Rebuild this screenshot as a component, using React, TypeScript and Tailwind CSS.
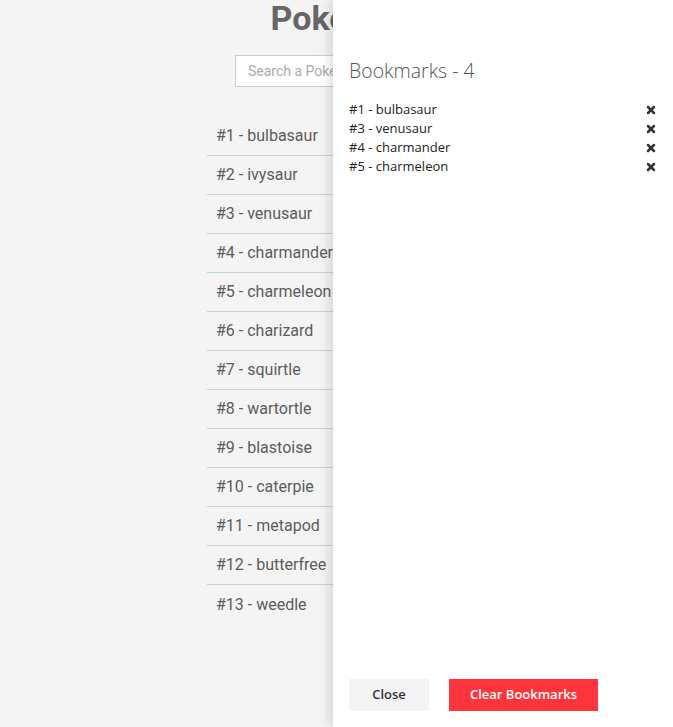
import { X } from "lucide-react";

const pokemon = [
  "bulbasaur",
  "ivysaur",
  "venusaur",
  "charmander",
  "charmeleon",
  "charizard",
  "squirtle",
  "wartortle",
  "blastoise",
  "caterpie",
  "metapod",
  "butterfree",
  "weedle",
];

const bookmarks = [
  { id: 1, name: "bulbasaur" },
  { id: 3, name: "venusaur" },
  { id: 4, name: "charmander" },
  { id: 5, name: "charmeleon" },
];

export default function App() {
  return (
    <div className="relative h-[727px] w-full overflow-hidden bg-[#f4f4f4] font-['Roboto',sans-serif]">
      <div className="flex flex-col items-center">
        <h1 className="text-[34px] font-bold leading-none text-[#666] pt-[1px]">Pokedex</h1>
        <input
          placeholder="Search a Pokemon"
          className="mt-[20px] h-[32px] w-[203px] border border-[#ccc] bg-white px-3 text-[14px] text-[#555] placeholder:text-[#aaa] outline-none"
        />
        <ul className="mt-[30px] w-[259px]">
          {pokemon.map((name, i) => (
            <li
              key={name}
              className={
                "flex h-[39px] items-center px-[9px] text-[16px] text-[#5c5c5c] " +
                (i < pokemon.length - 1 ? "border-b border-[#c5d3cf]" : "")
              }
            >
              #{i + 1} - {name}
            </li>
          ))}
        </ul>
      </div>

      <div className="absolute right-0 top-0 flex h-full w-[340px] flex-col bg-white px-4 pb-4 shadow-[-4px_0_10px_rgba(0,0,0,0.12)] font-['Open_Sans',sans-serif]">
        <h2 className="mt-[58px] text-[19.5px] font-light leading-[26px] text-[#555]">Bookmarks - 4</h2>
        <ul className="mt-[16px]">
          {bookmarks.map(b => (
            <li key={b.id} className="flex h-[19px] items-center justify-between text-[13px] text-[#222]">
              <span>#{b.id} - {b.name}</span>
              <X size={12} strokeWidth={5} className="text-[#333]" />
            </li>
          ))}
        </ul>
        <div className="mt-auto flex gap-5">
          <button className="h-[32px] w-[80px] bg-[#f4f4f4] text-[13px] font-semibold text-[#333]">Close</button>
          <button className="h-[32px] w-[149px] bg-[#ff353e] text-[13px] font-semibold text-white">Clear Bookmarks</button>
        </div>
      </div>
    </div>
  );
}
